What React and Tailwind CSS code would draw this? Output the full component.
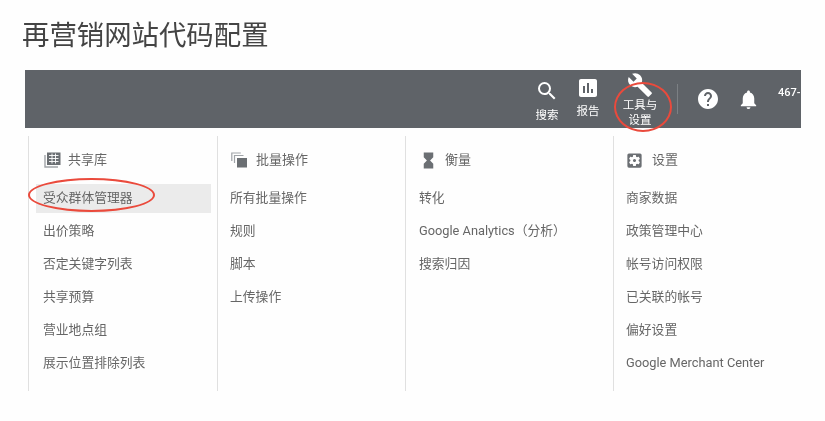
import { MdSearch, MdAssessment, MdBuild, MdHelp, MdNotifications, MdHourglassFull, MdSettingsApplications } from "react-icons/md";

const font = "font-['Roboto','Noto_Sans_CJK_SC',sans-serif]";

function LibraryIcon() {
  return (
    <svg width="17" height="16" viewBox="0 0 17 16" fill="none">
      <path d="M1 3v12h13" stroke="#a0a4a8" strokeWidth="1.4" />
      <rect x="3" y="0.5" width="13.5" height="12.5" fill="#6b6f73" />
      <path d="M5 3.5h9.5M5 6.5h9.5M5 9.5h9.5M8 1.5v10M11.5 1.5v10" stroke="#fff" strokeWidth="0.9" />
    </svg>
  );
}

function StackIcon() {
  return (
    <svg width="17" height="16" viewBox="0 0 17 16" fill="none">
      <path d="M0.8 9V1h9" stroke="#a0a4a8" strokeWidth="1.2" />
      <path d="M3.5 11V3.5h9" stroke="#a0a4a8" strokeWidth="1.2" />
      <rect x="6" y="6" width="10" height="9.5" fill="#6b6f73" />
    </svg>
  );
}

const columns = [
  {
    title: "共享库",
    icon: <LibraryIcon />,
    iconBox: "w-[24px]",
    width: "w-[189px]",
    padding: "pl-[7px] pr-[6px]",
    items: ["受众群体管理器", "出价策略", "否定关键字列表", "共享预算", "营业地点组", "展示位置排除列表"],
  },
  {
    title: "批量操作",
    icon: <StackIcon />,
    iconBox: "w-[25px]",
    width: "w-[188px]",
    padding: "pl-[5px] pr-[6px]",
    items: ["所有批量操作", "规则", "脚本", "上传操作"],
  },
  {
    title: "衡量",
    icon: <MdHourglassFull size={19} className="text-[#6b6f73] -ml-[1px]" />,
    iconBox: "w-[25px]",
    width: "w-[208px]",
    padding: "pl-[6px] pr-[6px]",
    items: ["转化", "Google Analytics（分析）", "搜索归因"],
  },
  {
    title: "设置",
    icon: <MdSettingsApplications size={19} className="text-[#6b6f73] -ml-[2px]" />,
    iconBox: "w-[25px]",
    width: "w-[188px]",
    padding: "pl-[5px] pr-[6px]",
    items: ["商家数据", "政策管理中心", "帐号访问权限", "已关联的帐号", "偏好设置", "Google Merchant Center"],
  },
];

function TopAction({ icon, lines, className }) {
  return (
    <div className={`flex flex-col items-center text-[11.5px] text-white ${className}`}>
      {icon}
      {lines.map((line) => (
        <span key={line}>{line}</span>
      ))}
    </div>
  );
}

export default function App() {
  return (
    <div className={`relative w-[825px] h-[421px] overflow-hidden bg-[#fefefe] blur-[0.4px] ${font}`}>
      <h1 className="pl-[22px] pt-[19px] h-[70px] text-[27.4px] leading-[34px] text-[#444]">再营销网站代码配置</h1>

      <div className="ml-[25px] w-[776px] h-[58px] bg-[#5f6368] flex items-start justify-end overflow-hidden">
        <TopAction className="w-[34px] mr-[7px] mt-[9px] leading-[14px]" icon={<MdSearch size={24} className="mb-[5px]" />} lines={["搜索"]} />
        <TopAction className="w-[34px] mr-[15px] mt-[6px] leading-[14px]" icon={<MdAssessment size={24} className="mb-[4px]" />} lines={["报告"]} />
        <TopAction className="w-[40px] mr-[17px] mt-[2px] leading-[15px]" icon={<MdBuild size={26} />} lines={["工具与", "设置"]} />
        <div className="w-px h-[30px] mt-[14px] bg-[#7c8084]" />
        <MdHelp size={24} className="ml-[18px] mt-[17px]" color="#fff" />
        <MdNotifications size={23} className="ml-[17px] mt-[18px]" color="#fff" />
        <span className="w-[23px] ml-[18px] mt-[16px] text-[11px] leading-[14px] font-medium text-white overflow-hidden whitespace-nowrap">467-0</span>
      </div>

      <div className="flex ml-[28px] mt-[8px] h-[255px]">
        {columns.map((col) => (
          <div key={col.title} className={`${col.width} ${col.padding} border-l border-[#e0e0e0]`}>
            <div className="flex items-center h-[48px] pl-[8px] text-[13px] text-[#666]">
              <span className={`flex shrink-0 ${col.iconBox}`}>{col.icon}</span>
              {col.title}
            </div>
            {col.items.map((item) => (
              <div
                key={item}
                className={`flex items-center h-[29px] mb-[4px] pl-[7px] pb-[1px] text-[12.8px] whitespace-nowrap text-[#666] ${
                  item === "受众群体管理器" ? "bg-[#ebebeb]" : ""
                }`}
              >
                {item}
              </div>
            ))}
          </div>
        ))}
      </div>

      {/* red marker circles drawn over the screenshot */}
      <div className="absolute left-[28px] top-[178px] w-[127px] h-[34px] rounded-[50%] border-[2.5px] border-[#ea4a3c]" />
      <div className="absolute left-[614px] top-[82px] w-[58px] h-[50px] rounded-[50%] border-[2.5px] border-[#ea4a3c]" />
    </div>
  );
}
